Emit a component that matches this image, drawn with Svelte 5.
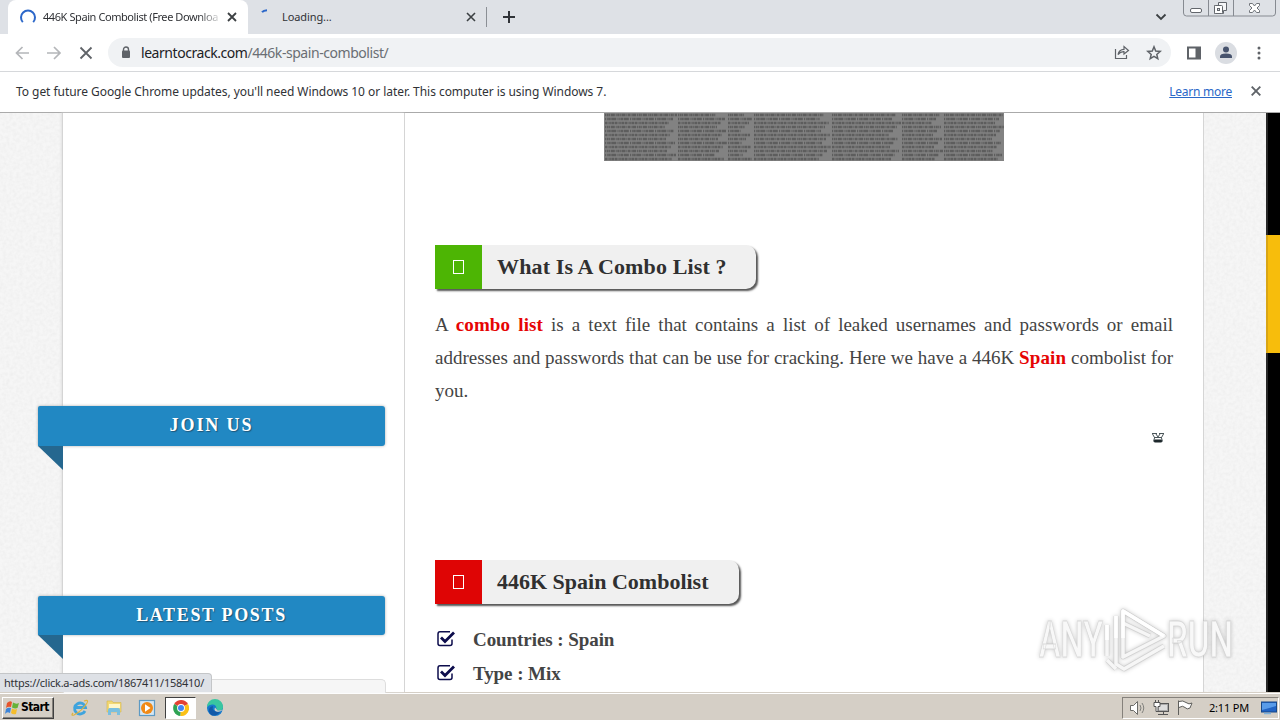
<script>
  const lines = [
    { parts: [['A '], ['combo list', true], [' is a text file that contains a list of leaked usernames and passwords or email']] },
    { parts: [['addresses and passwords that can be use for cracking. Here we have a 446K '], ['Spain', true], [' combolist for']] },
    { parts: [['you.']], last: true }
  ];

  const checks = ['Countries : Spain', 'Type : Mix'];

  // tiny rows of the combo preview, grouped in columns
  const columns = [
    [0, 73], [73, 50], [123, 26], [149, 78], [227, 70], [297, 42], [339, 61]
  ];
  const rows = [];
  columns.forEach(([x, w], c) => {
    for (let r = 0; r < 12; r++) {
      rows.push({ x, y: 2 + r * 4, x2: x + w - ((r * 17 + c * 11) % 13), dash: (r * 5 + c * 3) % 3 });
    }
  });
</script>

<div class="screen">
  <div class="tabs">
    <div class="tab active">
      <svg class="spin" width="18" height="18" viewBox="0 0 18 18"><path d="M3.800 14.200A7 7 0 1 1 14.200 14.200" fill="none" stroke="#2c67c9" stroke-width="2" /></svg>
      <span class="tab-title fade">446K Spain Combolist (Free Downloa</span>
      <svg class="x" width="10" height="10" viewBox="0 0 10 10"><path d="M1 1l8 8M9 1l-8 8" stroke="#3c4043" stroke-width="1.800" /></svg>
    </div>
    <div class="tab second">
      <svg class="spin" width="18" height="18" viewBox="0 0 18 18"><path d="M6 4.200Q7.500 2.500 11 2.300" fill="none" stroke="#2c67c9" stroke-width="2" /></svg>
      <span class="tab-title loading">Loading...</span>
      <svg class="x" width="10" height="10" viewBox="0 0 10 10"><path d="M1 1l8 8M9 1l-8 8" stroke="#3c4043" stroke-width="1.600" /></svg>
    </div>
    <i class="divider"></i>
    <svg class="plus" width="12" height="12" viewBox="0 0 12 12"><path d="M6 0v12M0 6h12" stroke="#303338" stroke-width="2" /></svg>
    <svg class="chevron" width="12" height="8" viewBox="0 0 12 8"><path d="M1.500 1.500L6 6l4.500-4.500" fill="none" stroke="#3c4043" stroke-width="1.800" /></svg>
    <svg class="winctl" width="94" height="18" viewBox="0 0 94 18">
      <path d="M.5 0v13q0 3 3 3h86q3 0 3-3V0M25.500 0v16M50.500 0v16" fill="none" stroke="#868a91" />
      <rect x="7.500" y="8.500" width="11" height="4" rx="1.500" fill="#fff" stroke="#62666c" />
      <path d="M35.500 2.500h8v8h-3v3h-9v-8h4z" fill="#f5f6f8" stroke="#62666c" />
      <rect x="31.500" y="5.500" width="8" height="8" rx="1" fill="#fff" stroke="#62666c" />
      <rect x="34.500" y="8.500" width="2" height="2" fill="#dee1e6" stroke="#62666c" />
      <path d="M66.500 3.500h3l2 2.500 2-2.500h3v2l-2.500 2.500 2.500 2.500v2h-3l-2-2.500-2 2.500h-3v-2l2.500-2.500-2.500-2.500z" fill="#fff" stroke="#70747a" />
    </svg>
  </div>

  <div class="toolbar">
    <svg class="nav" width="100" height="16" viewBox="0 0 100 16">
      <path d="M15 8H2.500M8.500 2L2.500 8l6 6M33 8h13M40 2l6 6-6 6" fill="none" stroke="#b4b6b9" stroke-width="1.700" />
      <path d="M66.500 2.500l11 11M77.500 2.500l-11 11" stroke="#5f6368" stroke-width="1.800" />
    </svg>
    <div class="omnibox">
      <svg class="lock" width="10" height="13" viewBox="0 0 10 13"><path d="M2.500 6V3.500a2.500 2.500 0 0 1 5 0V6" fill="none" stroke="#5f6368" stroke-width="1.400" /><rect x="1" y="4.500" width="8" height="7.500" rx="1" fill="#5f6368" /></svg>
      <span class="url">learntocrack.com<em>/446k-spain-combolist/</em></span>
      <svg class="share" width="16" height="15" viewBox="0 0 16 15"><path d="M1.500 4v9.500h11V10M4 9.500Q5 4.500 10 4.300V1.500L14.500 5.500 10 9V6.700Q6.500 6.500 4 9.500z" fill="none" stroke="#5f6368" stroke-width="1.200" /></svg>
      <svg class="star" width="16" height="16" viewBox="0 0 16 16"><path d="M8 1.800l1.700 4.200 4.500.4-3.400 3 1 4.300L8 11.400l-3.800 2.300 1-4.300-3.400-3 4.500-.4z" fill="none" stroke="#5f6368" stroke-width="1.500" /></svg>
    </div>
    <svg class="panel" width="14" height="14" viewBox="0 0 14 14"><path d="M1 1.500h12v11H1z" fill="none" stroke="#5f6368" stroke-width="2" /><path d="M8.500 1h5v12h-5z" fill="#5f6368" /></svg>
    <svg class="avatar" width="22" height="22" viewBox="0 0 22 22"><circle cx="11" cy="11" r="11" fill="#dadde2" /><circle cx="11" cy="7.500" r="3" fill="#47536d" /><path d="M5 16v-1.500Q5 11.500 11 11.500t6 3V16z" fill="#47536d" /></svg>
    <svg class="dots" width="4" height="14" viewBox="0 0 4 14"><circle cx="2" cy="2" r="1.500" fill="#5f6368" /><circle cx="2" cy="7" r="1.500" fill="#5f6368" /><circle cx="2" cy="12" r="1.500" fill="#5f6368" /></svg>
  </div>

  <div class="infobar">
    <span class="info">To get future Google Chrome updates, you'll need Windows 10 or later. This computer is using Windows 7.</span>
    <span class="learn">Learn more</span>
    <svg width="10" height="10" viewBox="0 0 10 10"><path d="M.7.7l8.600 8.600M9.300.7L.7 9.300" stroke="#5f6368" stroke-width="1.900" /></svg>
  </div>

  <div class="page">
    <svg class="texture" width="1266" height="579">
      <filter id="grain"><feTurbulence type="fractalNoise" baseFrequency=".3" numOctaves="2" seed="4" /><feColorMatrix values="0 0 0 0 .5  0 0 0 0 .5  0 0 0 0 .5  .22 0 0 0 -.07" /></filter>
      <rect width="1266" height="579" filter="url(#grain)" />
    </svg>
    <aside>
      <div class="ribbon join"><span>JOIN US</span></div>
      <div class="ribbon latest"><span>LATEST POSTS</span></div>
      <div class="box"></div>
    </aside>
    <main>
      <svg class="preview" width="400" height="48" viewBox="0 0 400 48">
        <rect width="400" height="48" fill="#828282" />
        {#each rows as r}
          <path class="row d{r.dash}" d="M{r.x + 1} {r.y}H{r.x2}" />
        {/each}
      </svg>
      <h2 class="green"><b><i></i></b><span class="h-one">What Is A Combo List ?</span></h2>
      <div class="para">
        {#each lines as line}
          <p class:last={line.last}>{#each line.parts as [text, red]}{#if red}<strong>{text}</strong>{:else}{text}{/if}{/each}</p>
        {/each}
      </div>
      <svg class="ad" width="14" height="12" viewBox="0 0 14 12"><path d="M1 1.500h5M8 1.500h5M1.500 2l2 3.500M12.500 2l-2 3.500M5 2l2 3 2-3M3 5.500h8" fill="none" stroke="#4a5559" /><path d="M3.500 6l-1 3.500M10.500 6l1 3.500" stroke="#4a5559" /><rect x="3" y="7.500" width="8" height="3" rx="1" fill="#1d272b" /></svg>
      <h2 class="red"><b><i></i></b><span class="h-two">446K Spain Combolist</span></h2>
      <ul>
        {#each checks as item}
          <li>
            <svg width="18" height="17" viewBox="0 0 18 17"><path d="M13 1.800H3Q1 1.800 1 4v9.500q0 2 2 2h10q2 0 2-2V9.500" fill="none" stroke="#0c0c4c" stroke-width="1.500" /><path d="M4 7.500l4 4 9-9" fill="none" stroke="#0c0c4c" stroke-width="2.800" /></svg>
            <span>{item}</span>
          </li>
        {/each}
      </ul>
    </main>
    <div class="gutter"></div>
    <div class="scroll"><div class="thumb"></div></div>
    <div class="status">https://click.a-ads.com/1867411/158410/</div>
    <svg class="mark" width="230" height="76" viewBox="0 0 230 76">
      <g class="letters">
        <text x="8" y="53" textLength="64" lengthAdjust="spacingAndGlyphs">ANY</text>
        <text x="136" y="53" textLength="66" lengthAdjust="spacingAndGlyphs">RUN</text>
      </g>
      <g fill="none" stroke-linejoin="round">
        <path d="M76 52V21M76 56l9 9M85 12v48l8 5 40-23M92 54V7l41 25-41 21V19l27 13" stroke="#c4c4c4" stroke-opacity=".6" stroke-width="5" />
        <path d="M76 52V21M76 56l9 9M85 12v48l8 5 40-23M92 54V7l41 25-41 21V19l27 13" stroke="#f6f6f6" stroke-width="3.500" />
        <path d="M76 36V21M85 34V12M92 34V7l41 25" stroke="#fff" stroke-width="3.500" />
      </g>
    </svg>
  </div>

  <footer>
    <div class="start">
      <svg width="16" height="16" viewBox="0 0 16 16"><path d="M3 3q3-3 5-1L7 7Q4 6 2 8z" fill="#e6542c" /><path d="M9 2.500q3 2 6 .5l-1.500 5Q11 9 8 7.500z" fill="#66b238" /><path d="M2 9q2-2 5-1l-1 5q-3-2-5 1z" fill="#3d85d9" /><path d="M8 8.500q3 1.500 5 .5l-1 5q-3 1-5-1z" fill="#f5bd2b" /></svg>
      <span>Start</span>
    </div>
    <svg class="app ie" width="18" height="18" viewBox="0 0 18 18"><path d="M14 12A5.500 5.500 0 1 1 14.500 8.500H5" fill="none" stroke="#3fa4dd" stroke-width="2.800" /><path d="M2 14Q-.5 17 3 16 11 12 16 4q2-4-3-2" fill="none" stroke="#ddb33b" stroke-width="1.200" /></svg>
    <svg class="app folder" width="18" height="18" viewBox="0 0 18 18"><path d="M2 2h5l1 1.500h8V13H2z" fill="#f2d873" stroke="#d4b74c" stroke-width=".6" /><path d="M4 5h11v4H4z" fill="#fff6c8" /><path d="M3 16v-5q0-2 2-2h8q2 0 2 2v5h-3v-3H6v3z" fill="#79bfdf" /></svg>
    <svg class="app media" width="18" height="18" viewBox="0 0 18 18"><rect x="1.500" y="1.500" width="15" height="15" fill="#d5e7f4" stroke="#5d9ac4" stroke-width="1.200" /><circle cx="9" cy="9" r="6" fill="#f18a16" /><path d="M7 5.300v7.400L12.500 9z" fill="#fff" /></svg>
    <div class="running">
      <svg width="16" height="16" viewBox="0 0 16 16"><path d="M8 8L1.200 4A8 8 0 0 1 15 4z" fill="#e34133" /><path d="M8 8L1.200 4A8 8 0 0 0 7.500 16z" fill="#2fa354" /><path d="M8 8L7.500 16A8 8 0 0 0 15 4z" fill="#fbc116" /><circle cx="8" cy="8" r="3.900" fill="#fff" /><circle cx="8" cy="8" r="3" fill="#4285f4" /></svg>
    </div>
    <svg class="app edge" width="18" height="18" viewBox="0 0 18 18"><circle cx="9" cy="9" r="8" fill="#1679cc" /><path d="M1 8a8 8 0 0 1 16 0q0 4-5 3.500-2 0-1.500-2Q10 5 6 5.500 3 5.500 1 8z" fill="#39c6a0" /><path d="M3 13q-1-5 4-6-2 6 7 6-4 5-9 3z" fill="#1259a8" /><path d="M9 8.500q-1.500 3 1.500 4t6.500-1.500q-1 1-1 3l2 0V10q-3 2-6.500 1.500Q10 9.500 9 8.500z" fill="#d5cfc6" /></svg>
    <div class="tray">
      <svg width="72" height="18" viewBox="0 0 72 18">
        <path d="M1.500 6.500h3l4-4v13l-4-4h-3z" fill="#fff" stroke="#6b6b68" /><path d="M11 6q2 3 0 6M13 4q3.500 5 0 10" fill="none" stroke="#80807c" />
        <rect x="28.500" y="4.500" width="11" height="8" fill="#aaa" stroke="#555" /><rect x="30" y="6" width="8" height="5" fill="#ddd" /><path d="M29 15.500h10M34.500 13v2" fill="none" stroke="#555" /><path d="M26.500 1v3M29.500 1v3M25 3.500h6v4h-2v5h-2v-5h-2z" fill="#fff" stroke="#555" />
        <path d="M49.500 1.500V16M50 2.500q4-1.500 7 1t6 .5l-2 5q-3 2-5-.5t-6 0" fill="#fff" stroke="#5f5f5c" />
      </svg>
      <span class="clock">2:11 PM</span>
      <svg width="16" height="14" viewBox="0 0 16 14"><rect x=".5" y="1" width="15" height="10" fill="#2163c4" stroke="#174889" /><path d="M1 2h14v3L1 9z" fill="#589be9" /><path d="M3 12.500h7" stroke="#7cb0dc" stroke-width="1.500" /></svg>
    </div>
  </footer>
</div>

<style>
  :global(body) {
    overflow: hidden;
  }
  .screen {
    width: 1280px;
    height: 720px;
    display: flex;
    flex-direction: column;
    overflow: hidden;
    font-family: "Noto Sans", "Open Sans", sans-serif;
    font-size: 12px;
    color: #303236;
    background: #fff;
  }
  .screen * {
    box-sizing: border-box;
  }
  svg {
    display: block;
    flex: none;
  }
  span {
    white-space: nowrap;
  }

  /* browser chrome */
  .tabs {
    height: 34px;
    flex: none;
    display: flex;
    background: #dee1e6;
    padding-left: 8px;
  }
  .tab {
    height: 34px;
    display: flex;
    align-items: center;
  }
  .active {
    width: 240px;
    padding-left: 11px;
    background: #fff;
    border-radius: 8px 8px 0 0;
  }
  .second {
    width: 238px;
    padding-left: 8px;
  }
  .tab-title {
    margin-left: 6px;
    padding-bottom: 1px;
    width: 176px;
    font-size: 11px;
    letter-spacing: -0.42px;
  }
  .fade {
    mask-image: linear-gradient(90deg, #000 155px, transparent 180px);
  }
  .loading {
    margin-left: 8px;
    letter-spacing: -0.1px;
  }
  .x {
    margin-left: 8px;
  }
  .second .x {
    margin-left: auto;
    margin-right: 10px;
  }
  .divider {
    width: 1px;
    height: 20px;
    margin-top: 7px;
    background: #8b8f95;
  }
  .plus {
    margin: 11px 0 0 16px;
  }
  .chevron {
    margin: 13px 0 0 640px;
  }
  .winctl {
    margin-left: 16px;
  }
  .toolbar {
    height: 38px;
    flex: none;
    display: flex;
    align-items: center;
    padding-left: 14px;
    border-bottom: 1px solid #d6d8db;
  }
  .omnibox {
    width: 1063px;
    height: 29px;
    margin-left: -6px;
    border-radius: 15px;
    background: #f0f2f4;
    display: flex;
    align-items: center;
    padding-left: 13px;
  }
  .url {
    margin-left: 10px;
    width: 973px;
    font-size: 14px;
    letter-spacing: -0.45px;
    color: #202124;
  }
  .url em {
    font-style: normal;
    color: #6a6e73;
  }
  .star {
    margin-left: 16px;
  }
  .panel {
    margin-left: 16px;
  }
  .avatar {
    margin-left: 14px;
  }
  .dots {
    margin-left: 20px;
  }
  .infobar {
    height: 41px;
    flex: none;
    display: flex;
    align-items: center;
    padding: 0 19px 2px 16px;
    border-bottom: 1px solid #aaa;
  }
  .info {
    flex: 1;
    letter-spacing: -0.05px;
  }
  .learn {
    color: #2a68c8;
    text-decoration: underline;
    letter-spacing: -0.25px;
    margin-right: 19px;
  }

  /* web page */
  .page {
    height: 579px;
    flex: none;
    display: flex;
    position: relative;
    background: #f6f6f6;
    font-family: "Liberation Serif", serif;
  }
  .texture {
    position: absolute;
    left: 0;
    top: 0;
  }
  aside {
    position: relative;
    width: 343px;
    margin-left: 62px;
    padding-top: 293px;
    border: 1px solid #d5d5d5;
    border-width: 0 1px;
    background: #fff;
    box-shadow: -1px 0 2px #e2e2e2;
  }
  .ribbon {
    width: 347px;
    height: 40px;
    margin-left: -25px;
    padding-bottom: 2px;
    position: relative;
    display: flex;
    align-items: center;
    justify-content: center;
    background: #2188c3;
    border-radius: 2px 3px 3px 0;
    box-shadow: 0 0 3px #aaa;
    color: #fff;
    font-size: 18px;
    font-weight: bold;
    letter-spacing: 1.9px;
    text-shadow: 1px 1px 1px #205576;
  }
  /* folded corner */
  .ribbon::after {
    content: "";
    position: absolute;
    left: 0;
    top: 100%;
    width: 25px;
    height: 24px;
    background: #25678f;
    clip-path: polygon(0 0, 100% 0, 100% 100%);
  }
  .latest {
    margin-top: 150px;
    height: 39px;
    padding-bottom: 1px;
    letter-spacing: 1.65px;
  }
  .box {
    height: 14px;
    width: 323px;
    margin-top: 44px;
    background: #f6f6f6;
    border: 1px solid #ddd;
    border-bottom: 0;
    border-radius: 5px 5px 0 0;
  }
  main {
    position: relative;
    width: 799px;
    padding: 0 30px;
    background: #fff;
    border-right: 1px solid #d5d5d5;
    color: #444;
    display: flex;
    flex-direction: column;
    align-items: flex-start;
  }
  .preview {
    margin-left: 169px;
  }
  .row {
    fill: none;
    stroke: #454545;
    stroke-width: 2.6;
    stroke-opacity: 0.6;
    stroke-dasharray: 1 0.6 2 0.5 1 0.7 4 0.9;
  }
  .d1 {
    stroke-dasharray: 2 0.5 1 0.8 1.5 0.6 3 0.6;
  }
  .d2 {
    stroke-dasharray: 1 0.8 1 0.4 2.5 0.6 5 1.2;
  }
  h2 {
    height: 44px;
    margin: 84px 0 0;
    display: flex;
    align-items: center;
    background: #f0f0f0;
    border-radius: 0 10px 10px 0;
    box-shadow: 2px 2px 2px #555;
    font-size: 22px;
    color: #303030;
  }
  h2 b {
    width: 47px;
    height: 44px;
    display: flex;
    align-items: center;
    justify-content: center;
    background: #4db504;
  }
  h2 i {
    width: 11px;
    height: 14px;
    border: 1px solid #fff;
  }
  h2 span {
    margin-left: 15px;
  }
  .h-one {
    letter-spacing: 0.13px;
  }
  .green {
    width: 321px;
  }
  .red {
    width: 304px;
    margin-top: 116px;
  }
  .red b {
    background: #df0505;
  }
  .para {
    width: 738px;
    margin-top: 19px;
  }
  p {
    margin: 0;
    font-size: 19px;
    line-height: 33px;
    text-align: justify;
    text-align-last: justify;
  }
  .last {
    text-align-last: left;
  }
  p strong {
    color: #e60404;
    letter-spacing: 0.1px;
  }
  .ad {
    margin: 25px 0 0 716px;
  }
  ul {
    list-style: none;
    margin: 19px 0 0;
    padding: 0 0 0 2px;
  }
  li {
    height: 34px;
    display: flex;
    align-items: center;
    font-size: 19px;
    font-weight: bold;
  }
  li svg {
    margin-bottom: 3px;
  }
  li span {
    margin-left: 18px;
    letter-spacing: -0.07px;
  }
  .gutter {
    width: 62px;
  }
  .scroll {
    width: 14px;
    padding-top: 122px;
    background: #000;
    border-left: 2px solid #282828;
  }
  .thumb {
    width: 14px;
    height: 118px;
    margin-left: -2px;
    background: #f7bd0c;
    border-left: 2px solid #d9a514;
  }
  .status {
    position: absolute;
    left: 0;
    bottom: 0;
    width: 212px;
    height: 19px;
    padding: 0 4px;
    line-height: 18px;
    border: 1px solid #c4c6c8;
    border-width: 1px 1px 0 0;
    border-radius: 0 4px 0 0;
    background: #dee1e6;
    font-family: "Noto Sans", sans-serif;
    font-size: 11px;
    letter-spacing: -0.26px;
    white-space: nowrap;
  }
  .mark {
    position: absolute;
    left: 1031px;
    top: 491px;
    font-family: Roboto, sans-serif;
    font-size: 50px;
    filter: drop-shadow(0 0 2px rgba(0, 0, 0, 0.22));
  }
  .letters {
    fill: #f8f8f8;
    font-weight: 500;
    stroke: #bbb;
    stroke-opacity: 0.45;
    stroke-width: 0.8;
  }

  /* taskbar */
  footer {
    height: 28px;
    flex: none;
    display: flex;
    align-items: center;
    background: #d5cfc6;
    border-top: 1px solid #d5cfc6;
    box-shadow: inset 0 1px #fff;
    padding: 2px 1px 0 2px;
  }
  .start {
    width: 52px;
    height: 22px;
    display: flex;
    align-items: center;
    padding-left: 1px;
    border: 1px solid #404040;
    border-color: #fff #404040 #404040 #fff;
    box-shadow: inset -1px -1px #85817b;
    font-family: "DejaVu Sans Condensed", sans-serif;
    font-weight: bold;
    font-size: 12px;
    letter-spacing: -0.6px;
    color: #000;
  }
  .start span {
    margin-left: 1px;
    padding-bottom: 1px;
  }
  .ie {
    margin-left: 17px;
  }
  .folder {
    margin-left: 16px;
  }
  .media {
    margin-left: 15px;
  }
  .running {
    width: 31px;
    height: 22px;
    margin-left: 9px;
    display: flex;
    align-items: center;
    justify-content: center;
    background: #fff;
    border: 1px solid #404040;
    border-color: #404040 #fff #fff #404040;
  }
  .edge {
    margin-left: 10px;
  }
  .tray {
    width: 157px;
    height: 22px;
    margin-left: auto;
    display: flex;
    align-items: center;
    padding-left: 6px;
    border: 1px solid #85817b;
    border-color: #85817b #fff #fff #85817b;
    color: #000;
  }
  .clock {
    width: 42px;
    margin: 0 10px 0 8px;
    padding-bottom: 1px;
    font-size: 11px;
    letter-spacing: -0.2px;
  }
</style>
